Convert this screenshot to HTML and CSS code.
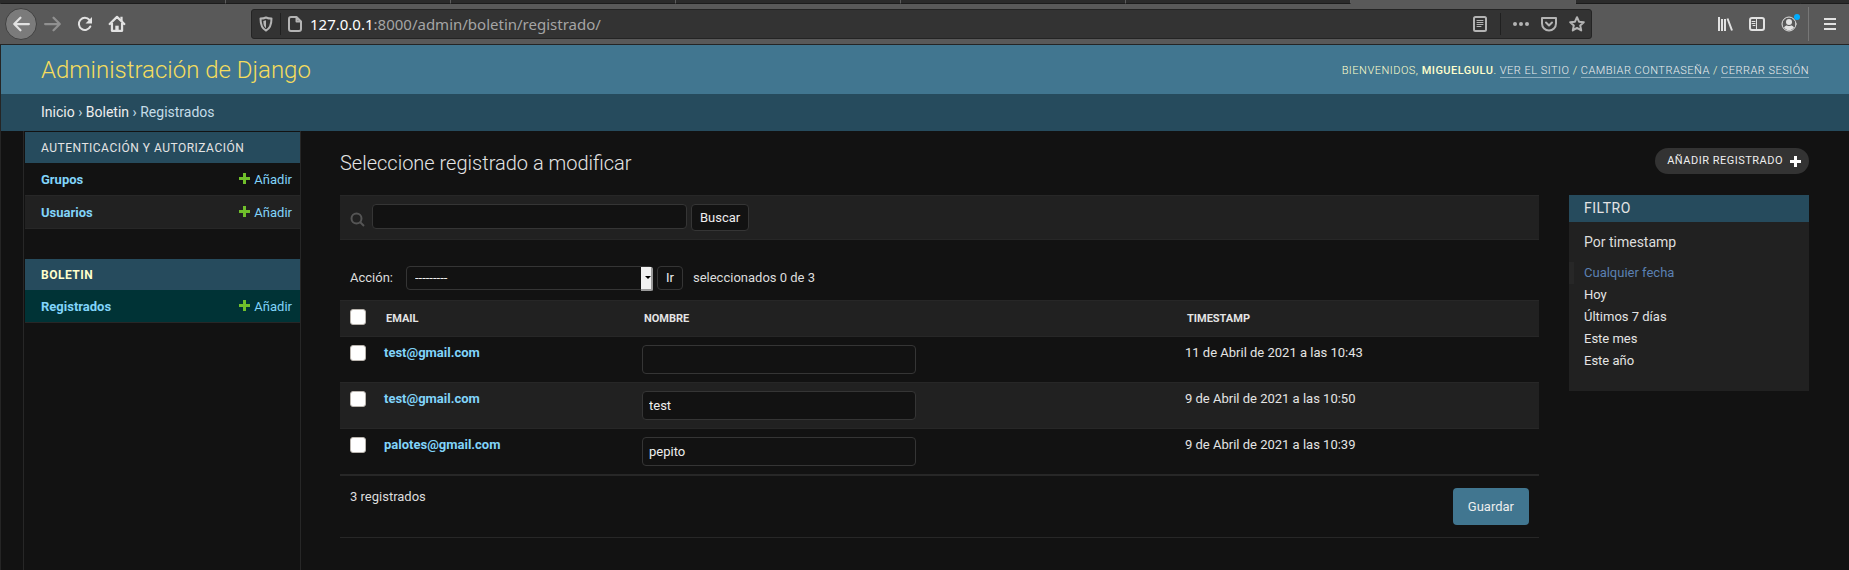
FILE: index.html
```html
<!DOCTYPE html>
<html lang="es">
<head>
<meta charset="utf-8">
<title>Seleccione registrado a modificar | Administración de Django</title>
<link rel="stylesheet" href="styles.css">
</head>
<body>
<div class="browser">
  <div class="tabs"><i></i><i></i><i></i><i></i><i></i><i></i><i class="active"></i><i></i><i></i></div>
  <div class="navbar">
    <div class="nav-buttons">
      <button class="icon-btn back" aria-label="Atrás"><svg width="18" height="18" viewBox="0 0 16 16"><path d="M15 8H2M7.500 2.500L2 8l5.500 5.500" /></svg></button>
      <button class="icon-btn dim" aria-label="Adelante"><svg width="18" height="18" viewBox="0 0 16 16"><path d="M1 8h13M8.500 2.500L14 8l-5.500 5.500" /></svg></button>
      <button class="icon-btn" aria-label="Recargar"><svg width="16" height="16" viewBox="0 0 16 16"><path d="M13.300 10.500A6 6 0 1 1 12.500 4"/><path class="fill" d="M15 1v6.500H8.500z"/></svg></button>
      <button class="icon-btn" aria-label="Inicio"><svg width="18" height="18" viewBox="0 0 16 16"><path d="M1.500 8L8 1.700 14.500 8M3.500 7v7h9V7"/><path class="fill" d="M6.500 14V9.500h3V14z"/><path class="fill" d="M11 1.500h2V6l-2-2z"/></svg></button>
    </div>
    <div class="urlbar">
      <button class="icon-btn" aria-label="Protección"><svg width="16" height="16" viewBox="0 0 16 16"><path d="M8 1.500c2 .9 4 1.100 5.500 1.100 0 6-1.200 9.900-5.500 12C3.700 12.500 2.500 8.600 2.500 2.600 4 2.600 6 2.400 8 1.500z"/><path class="fill" d="M8 4.300v7.900c-2-1.400-2.700-3.700-2.700-7.200z"/></svg></button>
      <span class="divider"></span>
      <button class="icon-btn" aria-label="Información del sitio"><svg width="16" height="16" viewBox="0 0 16 16"><path d="M4 1h5.500L14 5.500V13a2 2 0 0 1-2 2H4a2 2 0 0 1-2-2V3a2 2 0 0 1 2-2zM9.500 1v4.500H14"/></svg></button>
      <div class="address"><b>127.0.0.1</b>:8000/admin/boletin/registrado/</div>
      <button class="icon-btn" aria-label="Vista de lectura"><svg width="16" height="16" viewBox="0 0 16 16"><rect x="2" y="1" width="12" height="14" rx="1.500"/><path class="thin" d="M5 4.500h6M5 6.500h6M5 8.500h6M5 10.500h4"/></svg></button>
      <span class="divider wide"></span>
      <div class="page-actions">
        <button class="icon-btn" aria-label="Acciones de página"><svg width="16" height="16" viewBox="0 0 16 16"><g class="fill"><circle cx="2" cy="8" r="2"/><circle cx="8" cy="8" r="2"/><circle cx="14" cy="8" r="2"/></g></svg></button>
        <button class="icon-btn" aria-label="Pocket"><svg width="16" height="16" viewBox="0 0 16 16"><path d="M1 2h14v5.500a7 7 0 0 1-14 0z"/><path d="M5 6.500l3 3 3-3"/></svg></button>
        <button class="icon-btn" aria-label="Marcador"><svg width="16" height="16" viewBox="0 0 16 16"><path d="M8 1.200l2 4.500 4.800.5-3.600 3.300 1 4.900L8 11.900l-4.200 2.500 1-4.900L1.200 6.200 6 5.700z"/></svg></button>
      </div>
    </div>
    <div class="toolbar-end">
      <button class="icon-btn" aria-label="Biblioteca"><svg width="16" height="16" viewBox="0 0 16 16"><path class="flat" d="M2 1v14M5 3v12M8 3v12M10.500 2.500L15 14.500"/></svg></button>
      <button class="icon-btn" aria-label="Barra lateral"><svg width="16" height="16" viewBox="0 0 16 16"><rect x="1" y="2" width="14" height="12" rx="2"/><path class="thin" d="M7.500 2v12M3 5.500h3M3 7.500h3M4 9.500h2"/></svg></button>
      <button class="icon-btn account" aria-label="Cuenta"><svg width="16" height="16" viewBox="0 0 16 16"><circle class="thin" cx="8" cy="8" r="7"/><circle class="fill" cx="8" cy="6" r="3"/><path class="fill" d="M3 11.500c1-1.500 2-2 3-2 1 .8 3 .8 4 0 1 0 2 .5 3 2a6 6 0 0 1-10 0z"/></svg></button>
      <span class="edge"></span>
      <button class="icon-btn" aria-label="Menú"><svg width="16" height="16" viewBox="0 0 16 16"><path class="flat" d="M2 3h12M2 8h12M2 13h12"/></svg></button>
    </div>
  </div>
</div>

<div class="page">
  <header class="header">
    <div class="site-name"><a href="#">Administración de Django</a></div>
    <div class="user-tools">Bienvenidos, <strong>miguelgulu</strong>. <a href="#">Ver el sitio</a> / <a href="#">Cambiar contraseña</a> / <a href="#">Cerrar sesión</a></div>
  </header>
  <nav class="breadcrumbs"><a href="#">Inicio</a> › <a href="#">Boletin</a> › Registrados</nav>

  <div class="main">
    <nav class="sidebar">
      <section class="app">
        <h2><a href="#">Autenticación y autorización</a></h2>
        <div class="model"><a class="model-name" href="#">Grupos</a><a class="add" href="#"><svg width="11" height="11" viewBox="0 0 11 11"><path d="M5.500 0v11M0 5.500h11"/></svg>Añadir</a></div>
        <div class="model alt"><a class="model-name" href="#">Usuarios</a><a class="add" href="#"><svg width="11" height="11" viewBox="0 0 11 11"><path d="M5.500 0v11M0 5.500h11"/></svg>Añadir</a></div>
      </section>
      <section class="app">
        <h2 class="current"><a href="#">Boletin</a></h2>
        <div class="model current"><a class="model-name" href="#">Registrados</a><a class="add" href="#"><svg width="11" height="11" viewBox="0 0 11 11"><path d="M5.500 0v11M0 5.500h11"/></svg>Añadir</a></div>
      </section>
    </nav>

    <main class="content">
      <div class="title-row">
        <h1>Seleccione registrado a modificar</h1>
        <a class="add-button" href="#">Añadir registrado<svg width="11" height="11" viewBox="0 0 11 11"><path d="M5.500 0v11M0 5.500h11"/></svg></a>
      </div>
      <div class="columns">
        <div class="changelist">
          <form class="search">
            <label for="searchbar" aria-label="Buscar"><svg width="15" height="15" viewBox="0 0 15 15"><circle cx="6.500" cy="6.500" r="5"/><path d="M10 10l4 4"/></svg></label>
            <input type="text" id="searchbar" class="field">
            <button type="button" class="btn">Buscar</button>
          </form>
          <div class="actions">
            <label for="action">Acción:</label>
            <span class="select"><select id="action"><option>---------</option></select></span>
            <button type="button" class="btn small">Ir</button>
            <span class="counter">seleccionados 0 de 3</span>
          </div>
          <table class="results">
            <thead><tr><th class="c-check"><input type="checkbox" aria-label="Seleccionar todo"></th><th class="c-email">Email</th><th class="c-name">Nombre</th><th>Timestamp</th></tr></thead>
            <tbody>
              <tr><td><input type="checkbox" aria-label="Seleccionar test@gmail.com"></td><td><a href="#">test@gmail.com</a></td><td><input type="text" class="field" aria-label="Nombre" value=""></td><td>11 de Abril de 2021 a las 10:43</td></tr>
              <tr><td><input type="checkbox" aria-label="Seleccionar test@gmail.com"></td><td><a href="#">test@gmail.com</a></td><td><input type="text" class="field" aria-label="Nombre" value="test"></td><td>9 de Abril de 2021 a las 10:50</td></tr>
              <tr><td><input type="checkbox" aria-label="Seleccionar palotes@gmail.com"></td><td><a href="#">palotes@gmail.com</a></td><td><input type="text" class="field" aria-label="Nombre" value="pepito"></td><td>9 de Abril de 2021 a las 10:39</td></tr>
            </tbody>
          </table>
          <div class="paginator"><span>3 registrados</span><button type="button" class="save">Guardar</button></div>
        </div>
        <aside class="filter">
          <h2>Filtro</h2>
          <h3>Por timestamp</h3>
          <ul>
            <li class="selected"><a href="#">Cualquier fecha</a></li>
            <li><a href="#">Hoy</a></li>
            <li><a href="#">Últimos 7 días</a></li>
            <li><a href="#">Este mes</a></li>
            <li><a href="#">Este año</a></li>
          </ul>
        </aside>
      </div>
    </main>
  </div>
</div>
</body>
</html>
```
FILE: styles.css
```css
* { box-sizing: border-box; }
body {
  margin: 0;
  min-height: 100vh;
  display: flex;
  flex-direction: column;
  background: #121212;
  color: #e4e4e4;
  font: 13px/16px Roboto, "Liberation Sans", sans-serif;
}
a { color: #81d4fa; text-decoration: none; }
h1, h2, h3, ul { margin: 0; padding: 0; font-weight: 400; list-style: none; }
button, input, select { font: inherit; color: #eee; margin: 0; }
button { cursor: pointer; }

/* Browser chrome */
.browser { background: #595959; border-bottom: 1px solid #252525; }
.tabs { display: flex; height: 4px; padding-left: 1px; overflow: hidden; background: #2b2b2b; }
.tabs i { flex: 0 0 225px; border-right: 1px solid #5d5d5d; border-bottom: 1px solid #1c1c1c; }
.tabs .active { background: #595959; border-bottom-color: #595959; }
.tabs i:nth-last-child(2) { border-right-color: #2b2b2b; }
.tabs i:last-child { flex: 1; border-right: 0; }
.navbar { display: flex; align-items: center; height: 40px; padding: 0 3px 0 5px; }
.nav-buttons { display: flex; width: 246px; }
.icon-btn {
  display: flex;
  align-items: center;
  justify-content: center;
  width: 32px;
  height: 32px;
  padding: 0;
  border: 0;
  background: none;
}
.icon-btn svg { fill: none; stroke: #e2e2e2; stroke-width: 2; stroke-linejoin: round; stroke-linecap: round; }
.icon-btn .fill { fill: #e2e2e2; stroke: none; }
.icon-btn .thin { stroke-width: 1; }
.icon-btn .flat { stroke-linecap: butt; }
.dim { opacity: .4; }
.back { background: #7b7b7b; border: 1px solid #414141; border-radius: 50%; }
.urlbar {
  display: flex;
  align-items: center;
  flex: 1;
  height: 30px;
  background: #333;
  border: 1px solid #242424;
  border-radius: 3px;
}
.urlbar .icon-btn { width: 28px; height: 28px; }
.urlbar .icon-btn svg { stroke: #b4b4b4; }
.urlbar .icon-btn .fill { fill: #b4b4b4; }
.divider { width: 1px; height: 22px; background: #202020; }
.wide { margin: 0 6px; }
.address { flex: 1; padding-left: 1px; font: 15px/20px "Noto Sans", sans-serif; color: #a5a5a5; }
.address b { font-weight: 400; color: #fff; }
.page-actions { display: flex; }
.toolbar-end { display: flex; align-items: center; margin-left: 117px; }
.account { position: relative; }
.account::after {
  content: "";
  position: absolute;
  top: 6px;
  right: 5px;
  width: 6px;
  height: 6px;
  border-radius: 50%;
  background: #00adff;
}
.edge { width: 1px; height: 34px; background: #777; margin: 0 5px 0 3px; }

/* Site header */
.page { flex: 1; display: flex; flex-direction: column; border-left: 1px solid #252525; }
.header {
  display: flex;
  align-items: center;
  justify-content: space-between;
  height: 49px;
  padding: 0 40px;
  background: #417690;
  color: #ffc;
}
.site-name { font-size: 24px; line-height: 28px; font-weight: 300; }
.site-name a { color: #f5dd5d; }
.user-tools { padding-top: 2px; font-size: 11px; font-weight: 300; letter-spacing: .5px; text-transform: uppercase; }
.user-tools strong { font-weight: 500; }
.user-tools a { color: #eee; border-bottom: 1px solid #8eafbf; }
.breadcrumbs { padding: 10px 40px; background: #264b5d; color: #c4dce8; font-size: 14px; line-height: 17px; }
.breadcrumbs a { color: #eee; }

/* Sidebar */
.main { flex: 1; display: flex; }
.sidebar { width: 278px; margin-left: 22px; padding: 1px 0 0 1px; border: solid #272727; border-width: 0 1px; }
.app { margin-bottom: 30px; }
.app h2 { padding: 9px 16px 7px; background: #264b5d; font-size: 12px; letter-spacing: .5px; line-height: 15px; text-transform: uppercase; }
.app h2 a { color: #e4e4e4; }
.app h2.current { font-weight: 700; }
.app h2.current a { color: #ffc; }
.model { display: flex; justify-content: space-between; height: 33px; padding: 9px 8px 7px 16px; border-bottom: 1px solid #272727; }
.model-name { font-weight: 700; }
.model.alt { background: #212121; }
.model.current { background: #003336; }
.add { display: flex; gap: 4px; }
.add svg { fill: none; stroke: #70bf2b; stroke-width: 3; margin-top: 1px; }

/* Change list */
.content { flex: 1; min-width: 0; padding: 17px 40px 32px 39px; }
.title-row { display: flex; justify-content: space-between; align-items: flex-start; margin-bottom: 17px; }
h1 { font-size: 20px; line-height: 30px; font-weight: 300; }
.add-button {
  display: flex;
  align-items: center;
  gap: 7px;
  padding: 0 8px 0 12px;
  border-radius: 13px;
  background: #333;
  color: #eee;
  font-size: 11px;
  line-height: 26px;
  letter-spacing: .5px;
  text-transform: uppercase;
}
.add-button svg { stroke: #fff; stroke-width: 3; }
.columns { display: flex; align-items: flex-start; gap: 30px; }
.changelist { flex: 1; min-width: 0; }
.field { border: 1px solid #353535; border-radius: 4px; background: #121212; padding: 5px 6px; outline: 0; }
.btn { padding: 4px 8px; border: 1px solid #353535; border-radius: 4px; background: #121212; }
.search {
  display: flex;
  align-items: flex-start;
  height: 45px;
  padding: 8px 10px;
  border: solid #272727;
  border-width: 1px 0;
  background: #212121;
}
.search label { width: 22px; padding-top: 8px; }
.search svg { display: block; fill: none; stroke: #555; stroke-width: 2; }
.search .field { width: 315px; height: 25px; margin-right: 4px; }
.search .btn { height: 27px; }
.actions { display: flex; align-items: center; padding: 26px 10px 10px; color: #ddd; }
.actions label { width: 56px; }
.select { position: relative; width: 247px; margin-right: 4px; }
.select select {
  display: block;
  width: 100%;
  height: 24px;
  padding: 0 8px;
  appearance: none;
  border: 1px solid #353535;
  border-radius: 4px;
  background: #121212;
}
.select::before {
  content: "";
  position: absolute;
  top: 1px;
  right: 0;
  width: 10px;
  height: 22px;
  background: #f2f2f2;
  border: solid #999;
  border-width: 0 2px 2px 0;
  border-radius: 0 2px 2px 0;
}
.select::after {
  content: "";
  position: absolute;
  top: 10px;
  right: 2px;
  border: 3px solid transparent;
  border-top-color: #000;
  border-bottom: 0;
}
.btn.small { height: 24px; padding: 0 8px; margin-right: 10px; }
.results { width: 100%; border-collapse: separate; border-spacing: 0; table-layout: fixed; }
.results th {
  height: 37px;
  padding: 0 10px;
  border: solid #272727;
  border-width: 1px 0;
  background: #212121;
  font-size: 11px;
  text-align: left;
  text-transform: uppercase;
}
.results th.c-check { padding-top: 8px; vertical-align: top; }
.results td { height: 46px; padding: 8px; border-bottom: 1px solid #272727; vertical-align: top; }
.results tr:nth-child(even) td { background: #212121; }
.results td:first-child { padding-left: 10px; }
.results td .field { display: block; width: 274px; height: 29px; }
.results a { font-weight: 700; }
.c-check { width: 36px; }
.c-email { width: 258px; }
.c-name { width: 543px; }
input[type="checkbox"] {
  appearance: none;
  display: block;
  width: 16px;
  height: 16px;
  border: 1px solid #b9b4ae;
  border-radius: 3px;
  background: #fff;
}
.paginator {
  display: flex;
  align-items: flex-start;
  justify-content: space-between;
  padding: 12px 10px;
  border: solid #272727;
  border-width: 1px 0;
  color: #ddd;
}
.paginator span { line-height: 18px; }
.save { height: 37px; padding: 0 15px; border: 0; border-radius: 4px; background: #417690; }

/* Filter */
.filter { width: 240px; padding-bottom: 19px; background: #212121; }
.filter h2 { padding: 5px 15px; background: #264b5d; font-size: 14px; line-height: 17px; letter-spacing: .5px; text-transform: uppercase; }
.filter h3 { padding: 11px 15px; font-size: 14px; line-height: 18px; color: #ddd; }
.filter li { padding: 3px 15px; }
.filter li a { color: #e4e4e4; }
.filter .selected { padding-left: 10px; border-left: 5px solid #272727; }
.filter .selected a { color: #5b80b2; }
```
